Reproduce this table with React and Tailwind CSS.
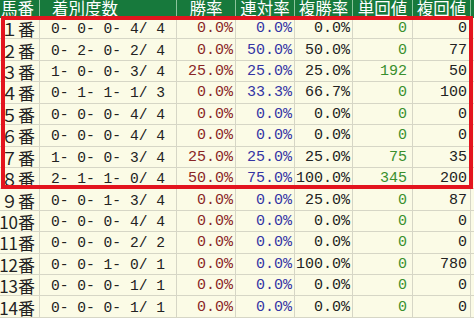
import React from 'react';

const rows = [
  ['１番', '0- 0- 0- 4/ 4', '0.0%', '0.0%', '0.0%', '0', '0'],
  ['２番', '0- 2- 0- 2/ 4', '0.0%', '50.0%', '50.0%', '0', '77'],
  ['３番', '1- 0- 0- 3/ 4', '25.0%', '25.0%', '25.0%', '192', '50'],
  ['４番', '0- 1- 1- 1/ 3', '0.0%', '33.3%', '66.7%', '0', '100'],
  ['５番', '0- 0- 0- 4/ 4', '0.0%', '0.0%', '0.0%', '0', '0'],
  ['６番', '0- 0- 0- 4/ 4', '0.0%', '0.0%', '0.0%', '0', '0'],
  ['７番', '1- 0- 0- 3/ 4', '25.0%', '25.0%', '25.0%', '75', '35'],
  ['８番', '2- 1- 1- 0/ 4', '50.0%', '75.0%', '100.0%', '345', '200'],
  ['９番', '0- 0- 1- 3/ 4', '0.0%', '0.0%', '25.0%', '0', '87'],
  ['10番', '0- 0- 0- 4/ 4', '0.0%', '0.0%', '0.0%', '0', '0'],
  ['11番', '0- 0- 0- 2/ 2', '0.0%', '0.0%', '0.0%', '0', '0'],
  ['12番', '0- 0- 1- 0/ 1', '0.0%', '0.0%', '100.0%', '0', '780'],
  ['13番', '0- 0- 0- 1/ 1', '0.0%', '0.0%', '0.0%', '0', '0'],
  ['14番', '0- 0- 0- 1/ 1', '0.0%', '0.0%', '0.0%', '0', '0'],
];

const headers = ['勝率', '連対率', '複勝率', '単回値', '複回値'];

export default function App() {
  return (
    <div className="relative w-[474px] h-[318px] overflow-hidden bg-[#fbfbe6]">
      <div className="grid grid-cols-[40px_137px_59px_59px_58px_60px_58px_3px] font-['Liberation_Mono','Noto_Sans_CJK_JP',monospace]">
        {/* HEADER */}
        <div className="h-[18px] bg-[#17793c] border-r border-[#8cc49c] text-white text-[16.5px] leading-none font-['Noto_Sans_CJK_JP',sans-serif] pl-[1px] pb-[2px] flex items-center whitespace-nowrap">
          馬番
        </div>
        <div className="h-[18px] bg-[#17793c] border-r border-[#8cc49c] text-white text-[16.5px] leading-none font-['Noto_Sans_CJK_JP',sans-serif] pl-[12px] pb-[2px] flex items-center">
          着別度数
        </div>
        {headers.map((h) => (
          <div
            key={h}
            className="h-[18px] bg-[#17793c] border-r border-[#8cc49c] text-white text-[16.5px] leading-none font-['Noto_Sans_CJK_JP',sans-serif] pb-[2px] flex items-center justify-center whitespace-nowrap"
          >
            {h}
          </div>
        ))}
        <div className="h-[18px] bg-[#17793c]" />

        {/* BODY */}
        {rows.map((r, i) => (
          <React.Fragment key={i}>
            <div className="h-[21.43px] border-r border-b border-[#d6d6c6] flex items-center justify-end pr-[4px] pt-[1px] text-[17px] leading-[17px] text-[#222] font-['Noto_Sans_CJK_JP',sans-serif] whitespace-nowrap">
              {r[0]}
            </div>
            <div className="h-[21.43px] border-r border-b border-[#d6d6c6] flex items-center justify-center pt-[2px] text-[14.6px] leading-[16px] text-[#222] whitespace-pre">
              {r[1]}
            </div>
            <div className="h-[21.43px] border-r border-b border-[#d6d6c6] flex items-center justify-end pr-[2px] pt-[2px] text-[15px] leading-[16px] text-[#8a2626] whitespace-pre">
              {r[2]}
            </div>
            <div className="h-[21.43px] border-r border-b border-[#d6d6c6] flex items-center justify-end pr-[2px] pt-[2px] text-[15px] leading-[16px] text-[#3434a4] whitespace-pre">
              {r[3]}
            </div>
            <div className="h-[21.43px] border-r border-b border-[#d6d6c6] flex items-center justify-end pr-[2px] pt-[2px] text-[15px] leading-[16px] text-[#222] whitespace-pre">
              {r[4]}
            </div>
            <div className="h-[21.43px] border-r border-b border-[#d6d6c6] flex items-center justify-end pr-[5px] pt-[2px] text-[15px] leading-[16px] text-[#3a8f2e] whitespace-pre">
              {r[5]}
            </div>
            <div className="h-[21.43px] border-r border-b border-[#d6d6c6] flex items-center justify-end pr-[3px] pt-[2px] text-[15px] leading-[16px] text-[#222] whitespace-pre">
              {r[6]}
            </div>
            <div className="h-[21.43px] border-b border-[#d6d6c6]" />
          </React.Fragment>
        ))}
      </div>

      {/* highlight box over rows 1-8 */}
      <div className="absolute left-[1px] top-[16px] w-[472px] h-[173px] border-[4px] border-[#e3141e] pointer-events-none" />
    </div>
  );
}
